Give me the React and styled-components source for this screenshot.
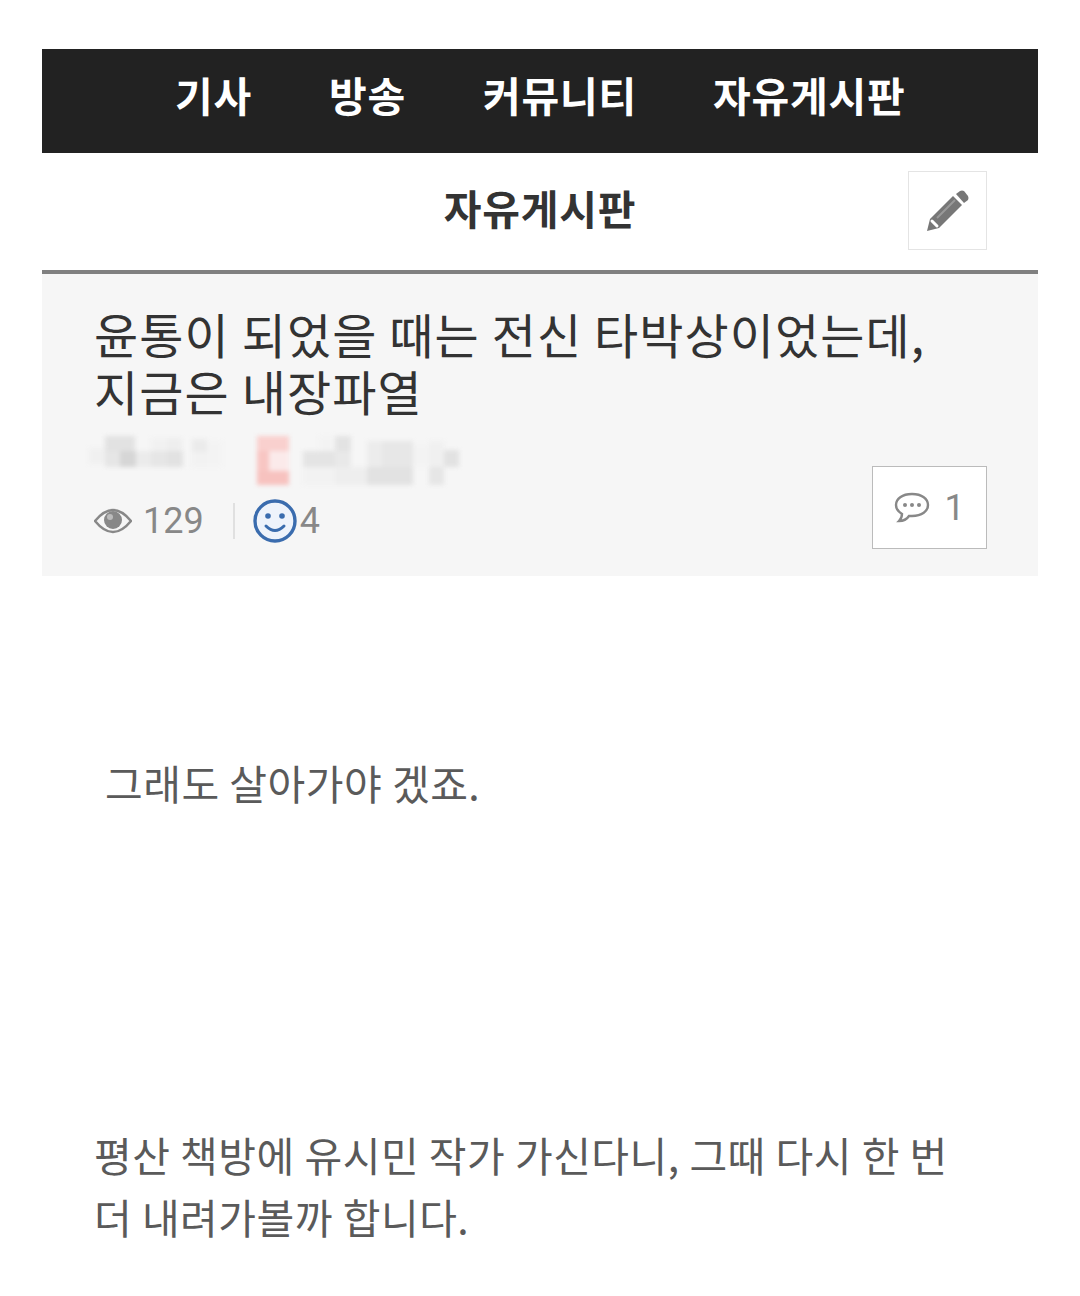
import styled, { createGlobalStyle } from "styled-components";

const FONT = `"Noto Sans CJK KR", "Roboto", sans-serif`;

const menus = [
  { label: "기사", width: 154 },
  { label: "방송", width: 154 },
  { label: "커뮤니티", width: 230 },
  { label: "자유게시판", width: 190 },
];

// pixelated author line: x, y, w, h, colour
const mosaic = [
  [0, 12, 16, 16, "#f0f0f0"],
  [16, 0, 30, 15, "#e2e2e2"],
  [16, 15, 15, 16, "#e6e6e6"],
  [31, 15, 16, 16, "#d6d6d6"],
  [47, 15, 15, 16, "#ebebeb"],
  [62, 2, 30, 13, "#f1f1f1"],
  [62, 15, 16, 16, "#e6e6e6"],
  [78, 2, 15, 13, "#eeeeee"],
  [78, 15, 16, 16, "#e2e2e2"],
  [103, 3, 15, 13, "#ebebeb"],
  [103, 16, 15, 15, "#f2f2f2"],
  [118, 5, 15, 26, "#f3f3f3"],
  [168, 0, 32, 15, "#f9d0ce"],
  [168, 15, 12, 20, "#f8c6c3"],
  [180, 15, 20, 20, "#fbeaea"],
  [168, 35, 32, 14, "#f7c2bf"],
  [214, 15, 32, 16, "#e4e4e4"],
  [214, 31, 32, 18, "#f2f2f2"],
  [230, 0, 15, 15, "#f3f3f3"],
  [246, 0, 16, 15, "#e3e3e3"],
  [246, 15, 16, 16, "#e9e9e9"],
  [246, 31, 32, 18, "#eeeeee"],
  [278, 5, 15, 26, "#ececec"],
  [278, 31, 46, 18, "#e2e2e2"],
  [293, 5, 31, 26, "#e7e7e7"],
  [324, 8, 16, 23, "#f3f3f3"],
  [340, 5, 15, 26, "#f0f0f0"],
  [340, 31, 15, 18, "#e6e6e6"],
  [355, 14, 15, 17, "#e2e2e2"],
];

export default function App() {
  return (
    <>
      <GlobalStyle />
      <Page>
        <MainNav>
          {menus.map((menu) => (
            <NavItem key={menu.label} $width={menu.width}>
              {menu.label}
            </NavItem>
          ))}
        </MainNav>
        <BoardHeader>
          <BoardTitle>자유게시판</BoardTitle>
          <WriteButton aria-label="글쓰기">
            <svg width="42" height="42" viewBox="0 0 42 42">
              <path d="M0 41 L3 29 L26 6 L35 15 L12 38 Z" fill="#777" />
              <path d="M29 4 L33 1 Q35 0 37 1 L41 6 Q42 8 41 10 L37 13 Z" fill="#777" />
              <path d="M5 31 L10 36" stroke="#fff" strokeWidth="3" strokeLinecap="round" />
              <path d="M10 28 L28 10" stroke="#999" strokeWidth="2" />
            </svg>
          </WriteButton>
        </BoardHeader>
        <PostHead>
          <PostTitle>
            윤통이 되었을 때는 전신 타박상이었는데,
            <br />
            지금은 내장파열
          </PostTitle>
          <Author>
            <svg width="370" height="50" viewBox="0 0 370 50">
              {mosaic.map(([x, y, w, h, fill], i) => (
                <rect key={i} x={x} y={y} width={w} height={h} fill={fill} />
              ))}
            </svg>
          </Author>
          <MetaRow>
            <Stats>
              <svg width="38" height="26" viewBox="0 0 38 26">
                <path
                  d="M1 13 Q10 2 19 2 Q28 2 37 13 Q28 24 19 24 Q10 24 1 13 Z"
                  fill="none"
                  stroke="#888"
                  strokeWidth="2.5"
                />
                <circle cx="19" cy="12" r="9" fill="#888" />
                <circle cx="16" cy="9" r="3" fill="#bbb" />
              </svg>
              <StatCount>129</StatCount>
              <StatDivider />
              <svg width="44" height="44" viewBox="0 0 44 44">
                <circle cx="22" cy="22" r="20" fill="#eef3fb" stroke="#3a6cae" strokeWidth="3.4" />
                <circle cx="15" cy="17" r="2.8" fill="#3a6cae" />
                <circle cx="29" cy="17" r="2.8" fill="#3a6cae" />
                <path
                  d="M13 27 Q22 36 31 27"
                  fill="none"
                  stroke="#3a6cae"
                  strokeWidth="3"
                  strokeLinecap="round"
                />
              </svg>
              <LikeCount>4</LikeCount>
            </Stats>
            <CommentButton>
              <svg width="36" height="32" viewBox="0 0 36 32">
                <path
                  d="M18 2 C8 2 2 7 2 13 C2 17 5 20 8 22 C8 25 7 27 5 29 C9 29 13 27 15 24 L18 24 C28 24 34 19 34 13 C34 7 28 2 18 2 Z"
                  fill="none"
                  stroke="#888"
                  strokeWidth="2.4"
                />
                <circle cx="11" cy="13" r="2" fill="#888" />
                <circle cx="18" cy="13" r="2" fill="#888" />
                <circle cx="25" cy="13" r="2" fill="#888" />
              </svg>
              <span>1</span>
            </CommentButton>
          </MetaRow>
        </PostHead>
        <PostBody>
          <Lead>그래도 살아가야 겠죠.</Lead>
          <Paragraph>
            평산 책방에 유시민 작가 가신다니, 그때 다시 한 번
            <br />더 내려가볼까 합니다.
          </Paragraph>
        </PostBody>
      </Page>
    </>
  );
}

const GlobalStyle = createGlobalStyle`
  html, body {
    margin: 0;
    padding: 0;
    background: #ffffff;
    font-family: ${FONT};
  }
`;

const Page = styled.div`
  height: 1296px;
  overflow: hidden;
  padding: 49px 42px 0;
  box-sizing: border-box;
`;

const MainNav = styled.nav`
  height: 104px;
  padding-left: 133px;
  box-sizing: border-box;
  background: #222222;
  display: flex;
`;

const NavItem = styled.a`
  width: ${(props) => props.$width}px;
  padding-top: 17px;
  color: #ffffff;
  font-size: 41px;
  font-weight: 700;
  line-height: 56px;
  letter-spacing: 0.8px;
  white-space: nowrap;
`;

const BoardHeader = styled.div`
  position: relative;
  height: 121px;
  box-sizing: border-box;
  border-bottom: 4px solid #808080;
  display: flex;
  justify-content: center;
`;

const BoardTitle = styled.h1`
  margin: 26px 0 0;
  color: #333333;
  font-size: 41px;
  font-weight: 700;
  line-height: 56px;
  letter-spacing: 0.8px;
`;

const WriteButton = styled.div`
  position: absolute;
  top: 18px;
  right: 51px;
  width: 79px;
  height: 79px;
  box-sizing: border-box;
  border: 1px solid #e4e4e4;
  display: flex;
  align-items: center;
  justify-content: center;
`;

const PostHead = styled.header`
  height: 302px;
  padding: 31px 51px 0 52px;
  box-sizing: border-box;
  background: #f6f6f6;
`;

const PostTitle = styled.h2`
  margin: 0;
  color: #333333;
  font-size: 48px;
  font-weight: 400;
  line-height: 57px;
  letter-spacing: 1.1px;
  white-space: nowrap;
`;

const Author = styled.div`
  height: 50px;
  margin-top: 17px;
  margin-left: -5px;

  svg {
    display: block;
    filter: blur(2px);
  }
`;

const MetaRow = styled.div`
  display: flex;
  justify-content: space-between;
  align-items: flex-start;
  margin-top: -20px;
`;

const Stats = styled.div`
  margin-top: 33px;
  display: flex;
  align-items: center;
  color: #888888;
  font-family: "Roboto", sans-serif;
  font-size: 36px;
`;

const StatCount = styled.span`
  margin-left: 11px;
`;

const StatDivider = styled.i`
  width: 2px;
  height: 36px;
  margin: 0 18px 0 29px;
  background: #e0e0e0;
`;

const LikeCount = styled.span`
  margin-left: 3px;
`;

const CommentButton = styled.div`
  width: 115px;
  height: 83px;
  box-sizing: border-box;
  border: 1px solid #bbbbbb;
  background: #ffffff;
  display: flex;
  align-items: center;
  justify-content: center;
  gap: 14px;
  color: #888888;
  font-family: "Roboto", sans-serif;
  font-size: 36px;
`;

const PostBody = styled.article`
  padding: 0 52px;
  color: #5a5a5a;
  font-size: 41px;
  letter-spacing: 0.5px;
  white-space: nowrap;
`;

const Lead = styled.p`
  margin: 176px 0 0 11px;
  line-height: 60px;
`;

const Paragraph = styled.p`
  margin: 311px 0 0;
  line-height: 62px;
`;
